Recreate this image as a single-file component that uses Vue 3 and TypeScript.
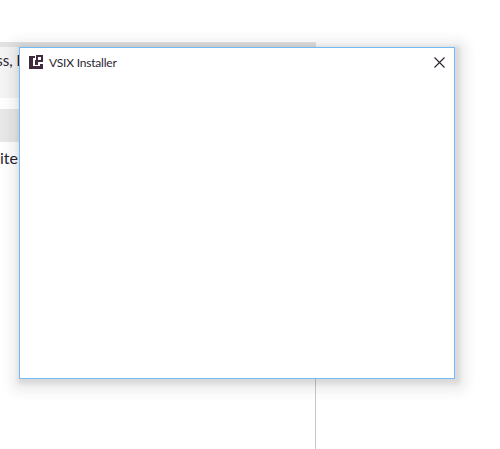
<script setup lang="ts">
const title = "VSIX Installer";
</script>

<template>
  <div class="page">
    <div class="behind">
      <div class="strip"></div>
      <div class="toolbar"><span class="clip-a">Business, <b class="caret">I</b></span></div>
      <div class="band"></div>
      <div class="row"><span class="clip-b">Website</span></div>
    </div>
    <section class="dialog">
      <header class="titlebar">
        <svg class="logo" width="14" height="15" viewBox="0 0 14 15">
          <path fill="#3f2a3f" d="M0 1h6v2H4v8h7V9h3v5H0z" />
          <path fill="#3f2a3f" d="M7 0h7v7H9v3H6V5h1zM9 2v3h3V2z" fill-rule="evenodd" />
        </svg>
        <span class="title">{{ title }}</span>
        <svg class="close" width="11" height="11" viewBox="0 0 11 11">
          <path d="M.5.5l10 10M10.5.5l-10 10" stroke="#2b2230" stroke-width="1.1" fill="none" />
        </svg>
      </header>
    </section>
  </div>
</template>

<style>
html, body { margin: 0; background: #fff; }
</style>

<style scoped>
.page {
  position: relative;
  width: 500px;
  height: 449px;
  overflow: hidden;
  background: #fff;
  font-family: "Lato", "Open Sans", sans-serif;
  color: #2b1f33;
}
.behind {
  width: 316px;
  height: 407px;
  margin-top: 42px;
  position: absolute;
  top: 0;
  left: 0;
  border-right: 1px solid #c8c8c8;
  box-sizing: border-box;
  display: flex;
  flex-direction: column;
}
.strip { height: 5px; background: #e2e2e2; margin-right: -1px; }
.toolbar {
  height: 51px;
  background: #f4f4f4;
  font-size: 15px;
  line-height: 26px;
  white-space: nowrap;
}
.caret { font-weight: 700; }
.band { height: 33px; margin-top: 11px; background: #e8e8e8; }
.row { font-size: 16px; line-height: 32px; white-space: nowrap; }
.clip-a { display: block; margin-left: -48px; }
.clip-b { display: block; margin-left: -40px; }
.dialog {
  position: absolute;
  left: 19px;
  top: 47px;
  width: 436px;
  height: 332px;
  box-sizing: border-box;
  background: #fff;
  border: 1px solid #72baf8;
  box-shadow: 2px 3px 12px 9px rgba(0, 0, 0, 0.08), 2px 2px 4px 3px rgba(0, 0, 0, 0.08);
}
.titlebar {
  display: flex;
  align-items: center;
  height: 28px;
  padding: 0 9px 0 9px;
}
.logo { flex: none; margin-right: 1px; }
.title {
  flex: 1;
  margin-left: 5px;
  font-size: 12px;
  letter-spacing: -0.2px;
}
.close { flex: none; }
</style>
